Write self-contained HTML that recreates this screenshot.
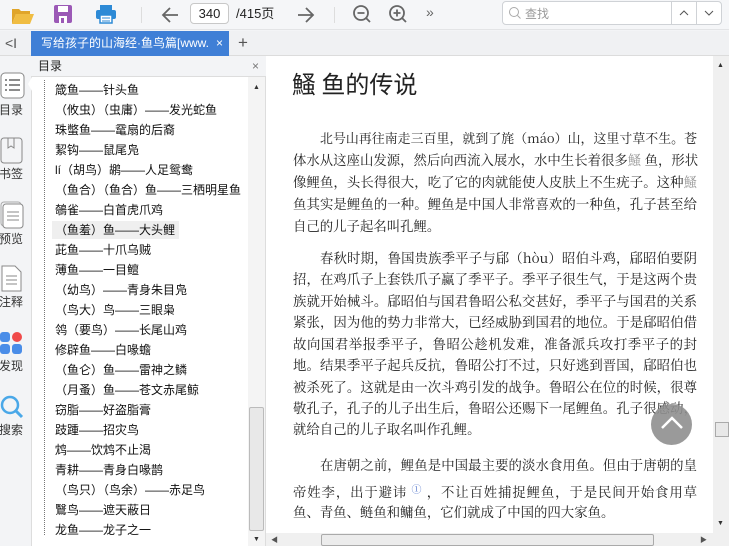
<!DOCTYPE html>
<html><head><meta charset="utf-8"><style>
*{margin:0;padding:0;box-sizing:border-box}
body{width:729px;height:546px;overflow:hidden;background:#f3f4f6;font-family:"Liberation Sans","Noto Sans CJK SC",sans-serif;position:relative;font-size:12px;color:#222}
.a{position:absolute}
#tb{left:0;top:0;width:729px;height:30px;background:#f5f6f8;border-bottom:1px solid #e3e4e6}
#tabs{left:0;top:31px;width:729px;height:25px;background:#f0f1f3;border-bottom:1px solid #dcdcdc}
.tab{left:31px;top:31px;width:198px;height:25px;background:#3f7fd6;color:#fff;font-size:12px;line-height:25px;padding-left:10px;white-space:nowrap;overflow:hidden}
#side{left:0;top:56px;width:31px;height:490px;background:#f3f4f6}
.sl{position:absolute;left:0;width:30px;text-align:center;font-size:12px;color:#333}
#toc{left:31px;top:56px;width:235px;height:490px;background:#fff;border-left:1px solid #ddd;border-right:1px solid #ddd}
#toch{left:31px;top:56px;width:235px;height:21px;background:#f3f4f6;border-bottom:1px solid #ddd;font-size:12px;line-height:21px;padding-left:7px}
.ti{position:absolute;left:55px;font-size:12px;white-space:nowrap;line-height:14px;color:#111}
#doc{left:266px;top:56px;width:447px;height:477px;background:#fff}
.ln{position:absolute;left:293px;width:404px;font-family:"Noto Serif CJK SC","Liberation Serif",serif;font-size:13.4px;color:#222;text-align:justify;text-align-last:justify;white-space:nowrap;line-height:16px}
.in{left:320px;width:377px}
.l{text-align-last:left;width:auto}
</style></head><body>
<div class="a" id="tb"></div>
<svg class="a" style="left:10px;top:4px" width="26" height="22"><path d="M2 5h7l2 2h9v3H6l-4 10z" fill="#e0a52a"/><path d="M6 10h18l-4 10H2z" fill="#f0bd43"/></svg>
<svg class="a" style="left:53px;top:4px" width="20" height="20"><rect x="1" y="1" width="18" height="18" rx="2" fill="#9b59b6"/><rect x="5" y="2" width="10" height="6" fill="#fff"/><rect x="6" y="12" width="8" height="7" fill="#fff"/><rect x="8" y="14" width="3" height="5" fill="#9b59b6"/></svg>
<svg class="a" style="left:95px;top:4px" width="22" height="20"><rect x="5" y="1" width="12" height="5" fill="#2d8ad6"/><rect x="1" y="6" width="20" height="9" rx="2" fill="#2d8ad6"/><rect x="5" y="11" width="12" height="8" fill="#fff" stroke="#2d8ad6" stroke-width="1.5"/><path d="M7 14h8M7 17h8" stroke="#2d8ad6"/></svg>
<div class="a" style="left:141px;top:7px;width:1px;height:16px;background:#ddd"></div>
<svg class="a" style="left:160px;top:5px" width="20" height="20"><path d="M18 10H3M10 3l-7 7 7 7" stroke="#666" stroke-width="1.8" fill="none"/></svg>
<div class="a" style="left:190px;top:3px;width:39px;height:21px;border:1px solid #c8c8c8;border-radius:4px;background:#fff;text-align:center;line-height:19px;font-size:13px">340</div>
<div class="a" style="left:236px;top:5px;font-size:13px;line-height:18px">/415页</div>
<svg class="a" style="left:296px;top:5px" width="20" height="20"><path d="M2 10h15M10 3l7 7-7 7" stroke="#666" stroke-width="1.8" fill="none"/></svg>
<div class="a" style="left:334px;top:7px;width:1px;height:16px;background:#ddd"></div>
<svg class="a" style="left:352px;top:4px" width="20" height="20"><circle cx="9" cy="9" r="7" stroke="#666" stroke-width="1.8" fill="none"/><path d="M5.5 9h7M14 14l4 4" stroke="#666" stroke-width="1.8"/></svg>
<svg class="a" style="left:388px;top:4px" width="20" height="20"><circle cx="9" cy="9" r="7" stroke="#666" stroke-width="1.8" fill="none"/><path d="M5.5 9h7M9 5.5v7M14 14l4 4" stroke="#666" stroke-width="1.8"/></svg>
<div class="a" style="left:426px;top:4px;font-size:14px;color:#666">»</div>
<div class="a" style="left:502px;top:1px;width:220px;height:24px;border:1px solid #cfd2d6;border-radius:4px;background:#fff"></div>
<svg class="a" style="left:508px;top:6px" width="14" height="14"><circle cx="6" cy="6" r="4.5" stroke="#aaa" fill="none"/><path d="M9.5 9.5l3 3" stroke="#aaa"/></svg>
<div class="a" style="left:525px;top:5px;font-size:12px;color:#999">查找</div>
<div class="a" style="left:671px;top:1px;width:1px;height:24px;background:#cfd2d6"></div>
<div class="a" style="left:696px;top:1px;width:1px;height:24px;background:#cfd2d6"></div>
<svg class="a" style="left:679px;top:9px" width="10" height="8"><path d="M1 6l4-4 4 4" stroke="#555" fill="none"/></svg>
<svg class="a" style="left:704px;top:9px" width="10" height="8"><path d="M1 2l4 4 4-4" stroke="#555" fill="none"/></svg>

<div class="a" id="tabs"></div>
<div class="a" style="left:5px;top:35px;font-size:14px;color:#555">&lt;I</div>
<div class="a tab">写给孩子的山海经·鱼鸟篇[www.<span style="position:absolute;right:6px;top:0">×</span></div>
<div class="a" style="left:238px;top:33px;font-size:17px;color:#555">+</div>

<div class="a" id="side"></div>
<svg class="a" style="left:0;top:72px" width="26" height="28"><rect x="1" y="1" width="23" height="25" rx="4" fill="#fff" stroke="#888"/><path d="M5 8h2M9 8h11M5 13h2M9 13h11M5 18h2M9 18h11" stroke="#666" stroke-width="1.5"/></svg>
<div class="sl" style="top:101px;left:-4px">目录</div>
<svg class="a" style="left:0;top:137px" width="24" height="28"><rect x="1" y="1" width="21" height="25" rx="3" fill="none" stroke="#888"/><path d="M8 1v10l3-2 3 2V1" stroke="#888" fill="none"/></svg>
<div class="sl" style="top:165px;left:-4px">书签</div>
<svg class="a" style="left:0;top:201px" width="24" height="28"><rect x="1" y="1" width="20" height="24" rx="3" fill="none" stroke="#aaa"/><rect x="3" y="3" width="20" height="24" rx="3" fill="#fff" stroke="#888"/><path d="M7 11h12M7 15h12M7 19h12" stroke="#888"/></svg>
<div class="sl" style="top:230px;left:-4px">预览</div>
<svg class="a" style="left:0;top:265px" width="24" height="28"><path d="M2 1h13l6 6v19H2z" fill="#fff" stroke="#888"/><path d="M6 11h11M6 15h11M6 19h11" stroke="#888"/></svg>
<div class="sl" style="top:293px;left:-4px">注释</div>
<svg class="a" style="left:0;top:331px" width="24" height="24"><rect x="0" y="1" width="10" height="10" rx="3" fill="#4a8de8"/><circle cx="17" cy="6" r="5" fill="#f04a4a"/><rect x="0" y="13" width="10" height="10" rx="3" fill="#4a8de8"/><rect x="12" y="13" width="10" height="10" rx="3" fill="#4a8de8"/></svg>
<div class="sl" style="top:357px;left:-4px">发现</div>
<svg class="a" style="left:0;top:395px" width="24" height="26"><circle cx="10" cy="10" r="8" stroke="#4aa8e8" stroke-width="2.5" fill="none"/><path d="M16 16l6 6" stroke="#4aa8e8" stroke-width="3"/></svg>
<div class="sl" style="top:421px;left:-4px">搜索</div>

<div class="a" id="toc"></div>
<div class="a" style="left:28px;top:77px;width:0;height:0;border-top:7px solid transparent;border-bottom:7px solid transparent;border-right:4px solid #fff"></div>
<div class="a" id="toch">目录<span style="position:absolute;right:7px;color:#777">×</span></div>
<div class="a" style="left:44px;top:80px;height:455px;border-left:1px dotted #777"></div>
<div class="a" style="left:52px;top:221px;width:127px;height:18px;background:#efefef"></div>
<div class="ti" style="top:83px">箴鱼——针头鱼</div>
<div class="ti" style="top:103px">（攸虫）（虫庸）——发光蛇鱼</div>
<div class="ti" style="top:123px">珠蟞鱼——鼋扇的后裔</div>
<div class="ti" style="top:143px">絜钩——鼠尾凫</div>
<div class="ti" style="top:163px">lí（胡鸟）鹕——人足鸳鸯</div>
<div class="ti" style="top:183px">（鱼合）（鱼合）鱼——三栖明星鱼</div>
<div class="ti" style="top:203px">鵸雀——白首虎爪鸡</div>
<div class="ti" style="top:223px">（鱼羞）鱼——大头鲤</div>
<div class="ti" style="top:243px">茈鱼——十爪乌贼</div>
<div class="ti" style="top:263px">薄鱼——一目鳣</div>
<div class="ti" style="top:283px">（幼鸟）——青身朱目凫</div>
<div class="ti" style="top:303px">（鸟大）鸟——三眼枭</div>
<div class="ti" style="top:323px">鸰（要鸟）——长尾山鸡</div>
<div class="ti" style="top:343px">修辟鱼——白喙蟾</div>
<div class="ti" style="top:363px">（鱼仑）鱼——雷神之鳞</div>
<div class="ti" style="top:383px">（月蚤）鱼——苍文赤尾鲸</div>
<div class="ti" style="top:403px">窃脂——好盗脂膏</div>
<div class="ti" style="top:423px">跂踵——招灾鸟</div>
<div class="ti" style="top:443px">鸩——饮鸩不止渴</div>
<div class="ti" style="top:463px">青耕——青身白喙鹊</div>
<div class="ti" style="top:483px">（鸟只）（鸟余）——赤足鸟</div>
<div class="ti" style="top:503px">鷖鸟——遮天蔽日</div>
<div class="ti" style="top:523px">龙鱼——龙子之一</div>
<div class="a" style="left:248px;top:77px;width:17px;height:469px;background:#f4f4f4"></div>
<div class="a" style="left:253px;top:84px;font-size:7px;color:#333">▲</div>
<div class="a" style="left:249px;top:407px;width:15px;height:124px;background:#e8e8e8;border:1px solid #bbb;border-radius:2px"></div>
<div class="a" style="left:253px;top:536px;font-size:7px;color:#333">▼</div>

<div class="a" id="doc"></div>
<div class="a" style="left:292px;top:68px;font-family:'Noto Sans CJK SC',sans-serif;font-size:24px;color:#222;line-height:30px">鰠&nbsp;鱼的传说</div>
<div class="ln in" style="top:130px;font-size:12.9px">北号山再往南走三百里，就到了旄（máo）山，这里寸草不生。苍</div>
<div class="ln" style="top:152px">体水从这座山发源，然后向西流入展水，水中生长着很多<span style="color:#999">鰠</span>&nbsp;鱼，形状</div>
<div class="ln" style="top:174px">像鲤鱼，头长得很大，吃了它的肉就能使人皮肤上不生疣子。这种<span style="color:#999">鰠</span></div>
<div class="ln" style="top:196px">鱼其实是鲤鱼的一种。鲤鱼是中国人非常喜欢的一种鱼，孔子甚至给</div>
<div class="ln l" style="top:218px">自己的儿子起名叫孔鲤。</div>
<div class="ln in" style="top:250px">春秋时期，鲁国贵族季平子与郈（hòu）昭伯斗鸡，郈昭伯要阴</div>
<div class="ln" style="top:271px">招，在鸡爪子上套铁爪子赢了季平子。季平子很生气，于是这两个贵</div>
<div class="ln" style="top:293px">族就开始械斗。郈昭伯与国君鲁昭公私交甚好，季平子与国君的关系</div>
<div class="ln" style="top:314px">紧张，因为他的势力非常大，已经威胁到国君的地位。于是郈昭伯借</div>
<div class="ln" style="top:336px">故向国君举报季平子，鲁昭公趁机发难，准备派兵攻打季平子的封</div>
<div class="ln" style="top:357px">地。结果季平子起兵反抗，鲁昭公打不过，只好逃到晋国，郈昭伯也</div>
<div class="ln" style="top:379px">被杀死了。这就是由一次斗鸡引发的战争。鲁昭公在位的时候，很尊</div>
<div class="ln" style="top:400px">敬孔子，孔子的儿子出生后，鲁昭公还赐下一尾鲤鱼。孔子很感动，</div>
<div class="ln l" style="top:421px">就给自己的儿子取名叫作孔鲤。</div>
<div class="ln in" style="top:457px">在唐朝之前，鲤鱼是中国最主要的淡水食用鱼。但由于唐朝的皇</div>
<div class="ln" style="top:481px">帝姓李，出于避讳 <span style="color:#5577cc;font-size:10px;vertical-align:4px">①</span> ，不让百姓捕捉鲤鱼，于是民间开始食用草</div>
<div class="ln l" style="top:504px">鱼、青鱼、鲢鱼和鳙鱼，它们就成了中国的四大家鱼。</div>
<div class="a" style="left:651px;top:404px;width:41px;height:41px;border-radius:50%;background:#8f8f8f;opacity:.9"></div>
<svg class="a" style="left:659px;top:414px" width="26" height="18"><path d="M3 14l10-10 10 10" stroke="#fff" stroke-width="2.5" fill="none"/></svg>
<div class="a" style="left:713px;top:56px;width:16px;height:477px;background:#f0f0f0"></div>
<div class="a" style="left:717px;top:62px;font-size:7px;color:#333">▲</div>
<div class="a" style="left:715px;top:422px;width:14px;height:15px;background:#e8e8e8;border:1px solid #aaa"></div>
<div class="a" style="left:717px;top:520px;font-size:7px;color:#333">▼</div>
<div class="a" style="left:266px;top:533px;width:463px;height:13px;background:#f0f0f0"></div>
<div class="a" style="left:271px;top:535px;font-size:7px;color:#555">◀</div>
<div class="a" style="left:321px;top:534px;width:333px;height:12px;background:#ececec;border:1px solid #aaa;border-radius:2px"></div>
<div class="a" style="left:700px;top:535px;font-size:7px;color:#555">▶</div>
</body></html>
